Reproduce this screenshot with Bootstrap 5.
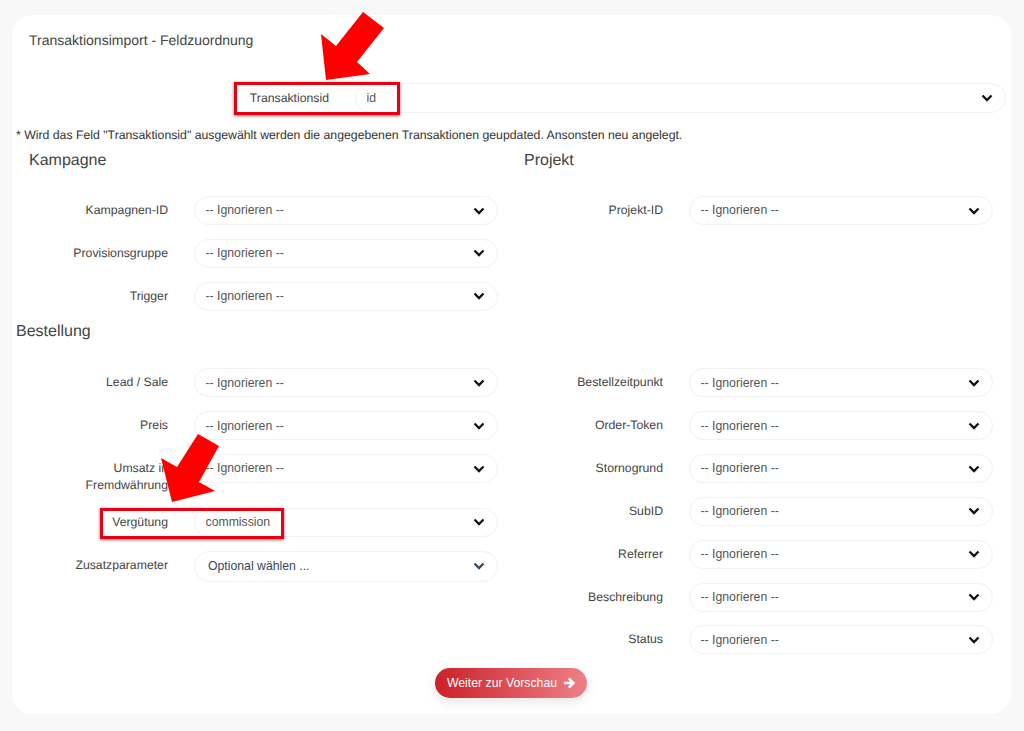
<!DOCTYPE html>
<html lang="de">
<head>
<meta charset="utf-8">
<title>Transaktionsimport</title>
<link href="https://cdn.jsdelivr.net/npm/bootstrap@5.3.0/dist/css/bootstrap.min.css" rel="stylesheet">
<style>
html,body{height:731px;overflow:hidden}
body{background:#f8f8f8;font-family:"Liberation Sans",Arial,sans-serif;font-size:12.25px;color:#444;text-rendering:geometricPrecision}
.sheet{height:699px;margin:15px 13px 0 12px;border:0;border-radius:20px;background:#fff;padding:0 5px 0 4px;box-shadow:none;color:#444}
.sheet-title{font-size:14px;font-weight:400;margin:0;padding:17px 0 0 13px;line-height:17px;color:#444}
.top-row{display:grid;grid-template-columns:313px 651px;column-gap:26px;margin-top:34px;align-items:center;height:30px}
.top-row label{text-align:right;color:#444;margin:0}
.hint{margin:14px 0 0;line-height:16px;color:#333;font-size:12.28px}
.group-title{font-size:16px;font-weight:400;line-height:20px;margin:0;color:#444}
.pad-title{padding-left:13px;margin-top:8px;margin-bottom:25px}
.map-row{display:grid;grid-template-columns:152px 304px;column-gap:26px;margin-bottom:13.83px;align-items:start;min-height:29px}
.map-row label{text-align:right;line-height:17px;padding-top:6px;color:#444;margin:0}
.pick{font-size:12.25px;height:29px;padding:0 30px 0 10.5px;border:1px solid #f2f2f2;border-radius:15px;color:#555;box-shadow:none;background-color:#fff;
background-image:url("data:image/svg+xml,%3Csvg xmlns='http://www.w3.org/2000/svg' viewBox='0 0 12 8'%3E%3Cpath d='M1.5 1.5 6 6l4.5-4.5' fill='none' stroke='%23111' stroke-width='2.3'/%3E%3C/svg%3E");
background-position:right 12px center;background-size:12px 8px;background-repeat:no-repeat;font-family:inherit}
.pick-wide{height:30px}
.pick-navy{height:31px;color:#34495e;padding-left:13px;background-image:url("data:image/svg+xml,%3Csvg xmlns='http://www.w3.org/2000/svg' viewBox='0 0 12 8'%3E%3Cpath d='M1.5 1.5 6 6l4.5-4.5' fill='none' stroke='%2334495e' stroke-width='2.3'/%3E%3C/svg%3E")}
.bestell-title{margin-top:-2px;margin-bottom:26px}
.go-btn{background:linear-gradient(90deg,#cc2027,#ee8088);color:#fff;font-size:12.25px;height:30px;width:152px;padding:0;border:0;display:inline-flex;align-items:center;justify-content:center;gap:6px;box-shadow:0 4px 12px rgba(0,0,0,.1)}
.go-btn:hover{color:#fff}
.mark-box{position:absolute;border:3px solid #e60012;box-shadow:0 1px 3px rgba(0,0,0,.55);pointer-events:none}
.arrow-mark{position:absolute;left:0;top:0;pointer-events:none}
.stage{position:relative;height:731px;overflow:hidden}
</style>
</head>
<body>
<div class="stage">
  <div class="card sheet">
    <h1 class="sheet-title">Transaktionsimport - Feldzuordnung</h1>
    <div class="top-row">
      <label>Transaktionsid</label>
      <select class="form-select pick pick-wide"><option>id</option></select>
    </div>
    <p class="hint">* Wird das Feld "Transaktionsid" ausgewählt werden die angegebenen Transaktionen geupdated. Ansonsten neu angelegt.</p>
    <div class="row g-0">
      <div class="col-6">
        <h2 class="group-title pad-title">Kampagne</h2>
        <div class="map-row"><label>Kampagnen-ID</label><select class="form-select pick"><option>-- Ignorieren --</option></select></div>
        <div class="map-row"><label>Provisionsgruppe</label><select class="form-select pick"><option>-- Ignorieren --</option></select></div>
        <div class="map-row"><label>Trigger</label><select class="form-select pick"><option>-- Ignorieren --</option></select></div>
      </div>
      <div class="col-6">
        <h2 class="group-title pad-title">Projekt</h2>
        <div class="map-row"><label>Projekt-ID</label><select class="form-select pick"><option>-- Ignorieren --</option></select></div>
      </div>
    </div>
    <h2 class="group-title bestell-title">Bestellung</h2>
    <div class="row g-0">
      <div class="col-6">
        <div class="map-row"><label>Lead / Sale</label><select class="form-select pick"><option>-- Ignorieren --</option></select></div>
        <div class="map-row"><label>Preis</label><select class="form-select pick"><option>-- Ignorieren --</option></select></div>
        <div class="map-row"><label>Umsatz in<br>Fremdwährung</label><select class="form-select pick"><option>-- Ignorieren --</option></select></div>
        <div class="map-row"><label>Vergütung</label><select class="form-select pick"><option>commission</option></select></div>
        <div class="map-row"><label>Zusatzparameter</label><select class="form-select pick pick-navy"><option>Optional wählen ...</option></select></div>
      </div>
      <div class="col-6">
        <div class="map-row"><label>Bestellzeitpunkt</label><select class="form-select pick"><option>-- Ignorieren --</option></select></div>
        <div class="map-row"><label>Order-Token</label><select class="form-select pick"><option>-- Ignorieren --</option></select></div>
        <div class="map-row"><label>Stornogrund</label><select class="form-select pick"><option>-- Ignorieren --</option></select></div>
        <div class="map-row"><label>SubID</label><select class="form-select pick"><option>-- Ignorieren --</option></select></div>
        <div class="map-row"><label>Referrer</label><select class="form-select pick"><option>-- Ignorieren --</option></select></div>
        <div class="map-row"><label>Beschreibung</label><select class="form-select pick"><option>-- Ignorieren --</option></select></div>
        <div class="map-row"><label>Status</label><select class="form-select pick"><option>-- Ignorieren --</option></select></div>
      </div>
    </div>
    <div class="text-center">
      <button type="button" class="btn rounded-pill go-btn">Weiter zur Vorschau
        <svg width="12" height="12" viewBox="0 0 12 12"><path d="M.8 6h9.4M5.8 1.4 10.4 6 5.8 10.6" fill="none" stroke="#fff" stroke-width="2.6"/></svg>
      </button>
    </div>
  </div>
  <div class="mark-box" style="left:234px;top:82px;width:166px;height:33px"></div>
  <div class="mark-box" style="left:100px;top:508px;width:184px;height:31px"></div>
  <svg class="arrow-mark" width="1024" height="731">
    <polygon fill="#fe0000" points="363,12 384,28 357,62 370,74 326,80 321,34 336,46"/>
    <polygon fill="#fe0000" points="198,434 219,446 199,482 215,491 172,502 161,458 177,467"/>
  </svg>
</div>
</body>
</html>
